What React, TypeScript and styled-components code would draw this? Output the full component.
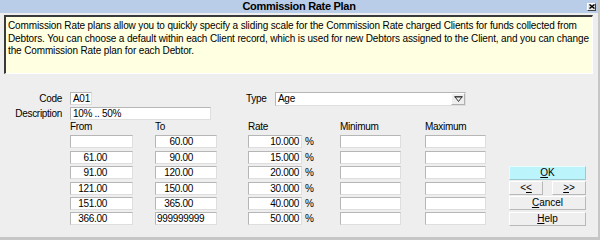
import React from 'react';
import styled, { createGlobalStyle } from 'styled-components';

const Global = createGlobalStyle`
  html, body { margin: 0; padding: 0; background: #eeeeee; }
  body { font-family: "Liberation Sans", Arial, sans-serif; }
`;

const Window = styled.div`
  width: 600px;
  height: 240px;
  box-sizing: border-box;
  background: #eeeeee;
  border-right: 2px solid #c6c6c6;
  border-bottom: 3px solid #c6c6c6;
  display: flex;
  flex-direction: column;
  font-family: "Liberation Sans", Arial, sans-serif;
  font-size: 10px;
  letter-spacing: -0.3px;
  color: #000;
  overflow: hidden;
`;

const TitleBar = styled.div`
  height: 13px;
  background: #b9cde8;
  display: grid;
  grid-template-columns: 1fr auto 1fr;
  align-items: center;
`;

const Title = styled.div`
  font-weight: bold;
  font-size: 11px;
  line-height: 13px;
  letter-spacing: -0.3px;
`;

const CloseBtn = styled.div`
  justify-self: end;
  margin-right: 2px;
  width: 9px;
  height: 8px;
  box-sizing: border-box;
  background: #e4e4e4;
  border-style: solid;
  border-width: 1px;
  border-color: #ffffff #404040 #404040 #ffffff;
  display: flex;
  align-items: center;
  justify-content: center;
`;

const InfoBox = styled.div`
  margin: 2px 5px 0 4px;
  height: 59px;
  box-sizing: border-box;
  background: #ffffe1;
  border-style: solid;
  border-width: 2px 1px 1px 2px;
  border-color: #3a3a3a #ffffff #ffffff #3a3a3a;
  padding: 3px 4px 0 2px;
  line-height: 12.5px;
  letter-spacing: -0.13px;
  white-space: nowrap;
`;

const TopGrid = styled.div`
  margin-top: 18px;
  display: grid;
  grid-template-columns: 70px 176px 29px 191px;
  grid-auto-rows: 13px;
  row-gap: 2px;
  align-items: center;
`;

const Label = styled.div<{ $right?: boolean }>`
  text-align: ${p => (p.$right ? 'right' : 'left')};
  padding-right: ${p => (p.$right ? '8px' : '0')};
  line-height: 13px;
  white-space: nowrap;
`;

const Field = styled.div<{ $w: number; $align?: 'left' | 'right'; $pad?: number }>`
  width: ${p => p.$w}px;
  height: 13px;
  box-sizing: border-box;
  background: #ffffff;
  border-style: solid;
  border-width: 1px;
  border-color: #b6b6b6 #dedede #dedede #b6b6b6;
  line-height: 11px;
  white-space: nowrap;
  overflow: hidden;
  text-align: ${p => p.$align ?? 'left'};
  ${p =>
    (p.$align ?? 'left') === 'right'
      ? `padding-right: ${p.$pad ?? 2}px;`
      : `padding-left: ${p.$pad ?? 2}px;`}
`;

const Combo = styled.div`
  width: 191px;
  height: 14px;
  box-sizing: border-box;
  background: #ffffff;
  border-style: solid;
  border-width: 1px;
  border-color: #b6b6b6 #dedede #dedede #b6b6b6;
  display: flex;
  align-items: stretch;
`;

const ComboText = styled.div`
  flex: 1;
  padding-left: 2px;
  line-height: 12px;
`;

const DropBtn = styled.div`
  width: 14px;
  box-sizing: border-box;
  background: #eeeeee;
  border-style: solid;
  border-width: 1px;
  border-color: #ffffff #b0b0b0 #b0b0b0 #ffffff;
  display: flex;
  align-items: center;
  justify-content: center;
`;

const Table = styled.div`
  padding-left: 70px;
  margin-top: 1px;
  display: grid;
  grid-template-columns: 85px 93px 92px 85px 84px 77px;
  grid-template-rows: 12px repeat(6, 13px);
  row-gap: 2.4px;
  align-items: center;
`;

const Head = styled.div`
  line-height: 12px;
`;

const RateCell = styled.div`
  display: flex;
  align-items: center;
`;

const Pct = styled.span`
  margin-left: 3px;
  font-size: 10px;
  letter-spacing: 0;
`;

const Button = styled.div<{ $primary?: boolean; $w?: number }>`
  width: ${p => (p.$w ? `${p.$w}px` : '100%')};
  height: 14px;
  box-sizing: border-box;
  background: ${p => (p.$primary ? '#bcf4fb' : '#efefef')};
  border-style: solid;
  border-width: 1px;
  border-color: ${p =>
    p.$primary ? '#e8fbfe #9cc8d0 #9cc8d0 #e8fbfe' : '#ffffff #b8b8b8 #b8b8b8 #ffffff'};
  text-align: center;
  line-height: 12px;
  letter-spacing: 0;
  & u { text-decoration: underline; text-underline-offset: 1px; }
`;

const ButtonPair = styled.div`
  display: flex;
  justify-content: space-between;
`;

const Empty = styled.div``;

type Row = { from: string; to: string; rate: string; toFull?: boolean };

const rows: Row[] = [
  { from: '', to: '60.00', rate: '10.000' },
  { from: '61.00', to: '90.00', rate: '15.000' },
  { from: '91.00', to: '120.00', rate: '20.000' },
  { from: '121.00', to: '150.00', rate: '30.000' },
  { from: '151.00', to: '365.00', rate: '40.000' },
  { from: '366.00', to: '999999999', rate: '50.000', toFull: true },
];

const buttonFor = (i: number) => {
  switch (i) {
    case 2:
      return (
        <Button $primary>
          <u>O</u>K
        </Button>
      );
    case 3:
      return (
        <ButtonPair>
          <Button $w={34}>
            &lt;<u>&lt;</u>
          </Button>
          <Button $w={34}>
            <u>&gt;</u>&gt;
          </Button>
        </ButtonPair>
      );
    case 4:
      return (
        <Button>
          <u>C</u>ancel
        </Button>
      );
    case 5:
      return (
        <Button>
          <u>H</u>elp
        </Button>
      );
    default:
      return <Empty />;
  }
};

export default function App() {
  return (
    <>
      <Global />
      <Window>
        <TitleBar>
          <span />
          <Title>Commission Rate Plan</Title>
          <CloseBtn>
            <svg width="6" height="5" viewBox="0 0 6 5">
              <path d="M0.5 0.5 L5.5 4.5 M5.5 0.5 L0.5 4.5" stroke="#000" strokeWidth="1.4" />
            </svg>
          </CloseBtn>
        </TitleBar>
        <InfoBox>
          Commission Rate plans allow you to quickly specify a sliding scale for the Commission Rate charged Clients for funds collected from
          <br />
          Debtors. You can choose a default within each Client record, which is used for new Debtors assigned to the Client, and you can change
          <br />
          the Commission Rate plan for each Debtor.
        </InfoBox>
        <TopGrid>
          <Label $right>Code</Label>
          <Field $w={22}>A01</Field>
          <Label>Type</Label>
          <Combo>
            <ComboText>Age</ComboText>
            <DropBtn>
              <svg width="9" height="6" viewBox="0 0 9 6">
                <path d="M0.5 0.8 H8.5" stroke="#333" strokeWidth="1.4" />
                <path d="M1 0.8 L4.5 5.5 L8 0.8" fill="none" stroke="#333" strokeWidth="1" />
              </svg>
            </DropBtn>
          </Combo>
          <Label $right>Description</Label>
          <Field $w={141}>10% .. 50%</Field>
        </TopGrid>
        <Table>
          <Head>From</Head>
          <Head>To</Head>
          <Head>Rate</Head>
          <Head>Minimum</Head>
          <Head>Maximum</Head>
          <Empty />
          {rows.map((r, i) => (
            <React.Fragment key={i}>
              <Field $w={63} $align="right" $pad={25}>
                {r.from}
              </Field>
              {r.toFull ? (
                <Field $w={62} $pad={1}>
                  {r.to}
                </Field>
              ) : (
                <Field $w={62} $align="right" $pad={23}>
                  {r.to}
                </Field>
              )}
              <RateCell>
                <Field $w={54} $align="right" $pad={2}>
                  {r.rate}
                </Field>
                <Pct>%</Pct>
              </RateCell>
              <Field $w={61} />
              <Field $w={61} />
              {buttonFor(i)}
            </React.Fragment>
          ))}
        </Table>
      </Window>
    </>
  );
}
